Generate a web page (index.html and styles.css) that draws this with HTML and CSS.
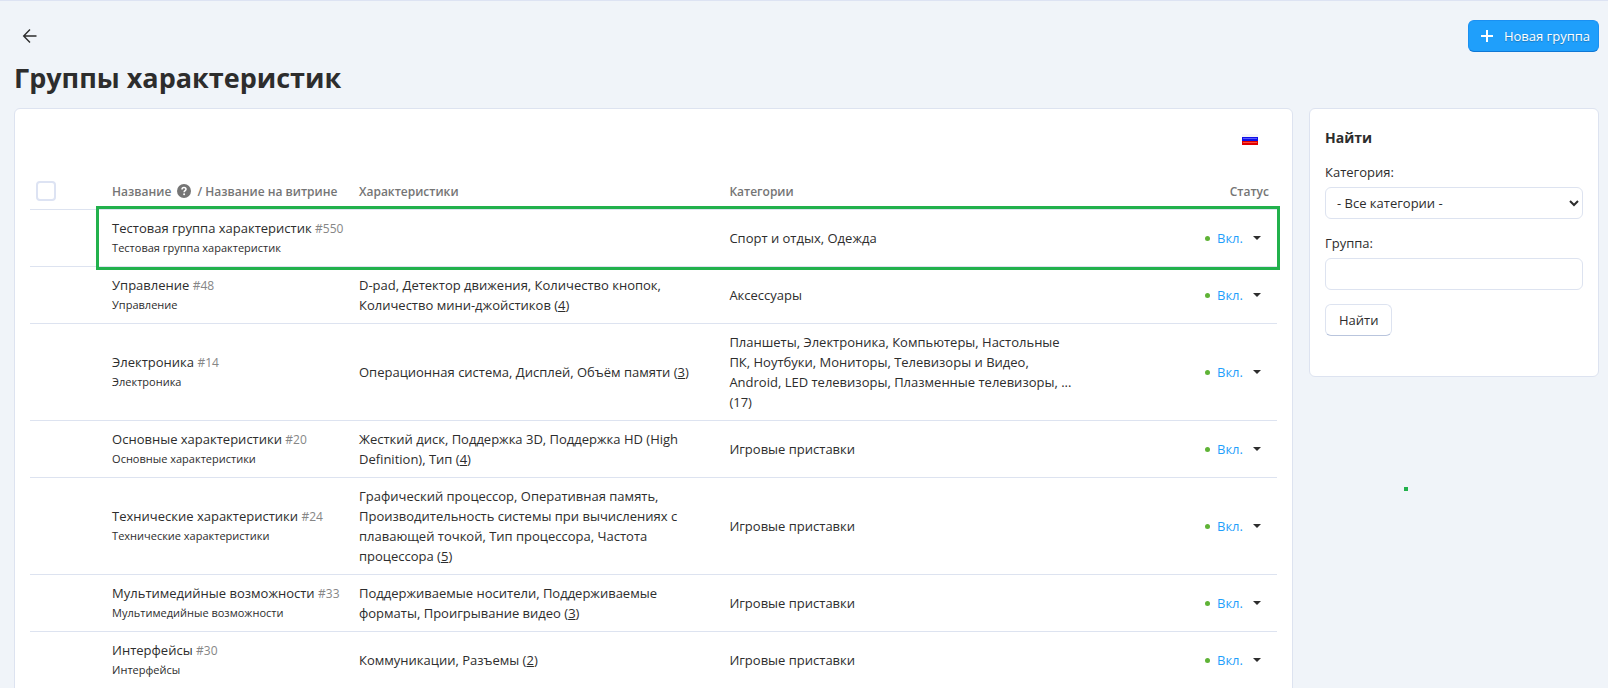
FILE: index.html
```html
<!DOCTYPE html>
<html lang="ru">
<head>
  <meta charset="UTF-8" />
  <meta name="viewport" content="width=device-width, initial-scale=1.0" />
  <title>Группы характеристик</title>
  <link rel="stylesheet" href="styles.css">
</head>
<body>
  <header class="topbar">
    <a class="back" href="#" aria-label="Назад">
      <svg width="16" height="16" viewBox="0 0 16 16" fill="none" stroke="#2d2d2d" stroke-width="1.4"><path d="M14.5 8H2M8 1.6L1.7 8L8 14.4"/></svg>
    </a>
    <button class="btn btn-primary" type="button">
      <svg width="12" height="12" viewBox="0 0 12 12" fill="#fff"><path d="M5 0h2v5h5v2H7v5H5V7H0V5h5z"/></svg>
      Новая группа
    </button>
  </header>

  <h1>Группы характеристик</h1>

  <div class="layout">
    <main class="card content">
      <!-- Language -->
      <div class="lang">
        <svg class="flag" width="16" height="11" viewBox="0 0 16 11">
          <path fill="#f4f4f8" d="M0 0h16v4H0z"/>
          <path fill="#1010e8" d="M0 3h16v5H0z"/>
          <path fill="#5a5aff" d="M1 4h14v1H1z"/>
          <path fill="#e00000" d="M0 7h16v4H0z"/>
          <path fill="#ff4a3a" d="M1 8h14v1H1z"/>
        </svg>
      </div>

      <!-- Feature groups -->
      <table class="groups">
        <colgroup>
          <col class="col-check"><col class="col-name"><col class="col-features"><col class="col-categories"><col class="col-status">
        </colgroup>
        <thead>
          <tr>
            <th class="check"><input type="checkbox" aria-label="Выбрать все"></th>
            <th>Название <svg class="help" width="14" height="14" viewBox="0 0 14 14"><circle cx="7" cy="7" r="7" fill="#757575"/><path d="M5 5.4C5 4.1 5.9 3.5 7 3.5s2 .7 2 1.8C9 6.600 7.100 6.600 7.100 8.200" fill="none" stroke="#fff" stroke-width="1.500"/><circle cx="7.100" cy="10.200" r="1" fill="#fff"/></svg> / Название на витрине</th>
            <th>Характеристики</th>
            <th>Категории</th>
            <th class="status">Статус</th>
          </tr>
        </thead>
        <tbody>
          <tr class="marked">
            <td></td>
            <td class="name">Тестовая группа характеристик <span class="id">#550</span><small>Тестовая группа характеристик</small></td>
            <td></td>
            <td>Спорт и отдых, Одежда</td>
            <td class="status"><button class="toggle" type="button">Вкл.</button></td>
          </tr>
          <tr>
            <td></td>
            <td class="name">Управление <span class="id">#48</span><small>Управление</small></td>
            <td>D-pad, Детектор движения, Количество кнопок, Количество мини-джойстиков (<a href="#">4</a>)</td>
            <td>Аксессуары</td>
            <td class="status"><button class="toggle" type="button">Вкл.</button></td>
          </tr>
          <tr>
            <td></td>
            <td class="name">Электроника <span class="id">#14</span><small>Электроника</small></td>
            <td>Операционная система, Дисплей, Объём памяти (<a href="#">3</a>)</td>
            <td class="categories">Планшеты, Электроника, Компьютеры, Настольные ПК, Ноутбуки, Мониторы, Телевизоры и Видео, Android, LED телевизоры, Плазменные телевизоры, ... (17)</td>
            <td class="status"><button class="toggle" type="button">Вкл.</button></td>
          </tr>
          <tr>
            <td></td>
            <td class="name">Основные характеристики <span class="id">#20</span><small>Основные характеристики</small></td>
            <td>Жесткий диск, Поддержка 3D, Поддержка HD (High Definition), Тип (<a href="#">4</a>)</td>
            <td>Игровые приставки</td>
            <td class="status"><button class="toggle" type="button">Вкл.</button></td>
          </tr>
          <tr>
            <td></td>
            <td class="name">Технические характеристики <span class="id">#24</span><small>Технические характеристики</small></td>
            <td>Графический процессор, Оперативная память, Производительность системы при вычислениях с плавающей точкой, Тип процессора, Частота процессора (<a href="#">5</a>)</td>
            <td>Игровые приставки</td>
            <td class="status"><button class="toggle" type="button">Вкл.</button></td>
          </tr>
          <tr>
            <td></td>
            <td class="name">Мультимедийные возможности <span class="id">#33</span><small>Мультимедийные возможности</small></td>
            <td>Поддерживаемые носители, Поддерживаемые форматы, Проигрывание видео (<a href="#">3</a>)</td>
            <td>Игровые приставки</td>
            <td class="status"><button class="toggle" type="button">Вкл.</button></td>
          </tr>
          <tr>
            <td></td>
            <td class="name">Интерфейсы <span class="id">#30</span><small>Интерфейсы</small></td>
            <td>Коммуникации, Разъемы (<a href="#">2</a>)</td>
            <td>Игровые приставки</td>
            <td class="status"><button class="toggle" type="button">Вкл.</button></td>
          </tr>
        </tbody>
      </table>
    </main>

    <!-- Search -->
    <aside class="sidebar">
      <form class="card search">
        <h2>Найти</h2>
        <label for="category">Категория:</label>
        <select id="category"><option>- Все категории -</option></select>
        <label for="group">Группа:</label>
        <input type="text" id="group">
        <button class="btn" type="button">Найти</button>
      </form>
      <span class="marker"></span>
    </aside>
  </div>
</body>
</html>
```

FILE: styles.css
```css
/* ===== Base ===== */
* { box-sizing: border-box; margin: 0; padding: 0; }
body {
  height: 100vh;
  overflow: hidden;
  padding: 19px 9px 0 14px;
  border-top: 1px solid #dde3f3;
  background: #f0f4f9;
  color: #2d2d2d;
  font: 13px/20px "Open Sans", "Noto Sans", sans-serif;
}
button, input, select { font: inherit; color: inherit; }
h1 {
  margin: 6px 0 10px;
  font-size: 27px;
  line-height: 40px;
}

/* ===== Top bar ===== */
.topbar {
  display: flex;
  justify-content: space-between;
  align-items: center;
}
.back {
  display: flex;
  margin-left: 8px;
}

/* ===== Buttons ===== */
.btn {
  display: inline-flex;
  align-items: center;
  height: 32px;
  padding: 0 13px;
  border: 1px solid #dde3f0;
  border-bottom-color: #b9c5dd;
  border-radius: 6px;
  background: #fff;
  cursor: pointer;
}
.btn-primary {
  gap: 11px;
  padding: 0 8px 0 12px;
  border-color: #1a90f2;
  border-bottom-color: #0f77d4;
  background: #1f9ffb;
  color: #fff;
  text-shadow: 0 1px 1px rgba(0, 0, 0, 0.25);
}

/* ===== Layout ===== */
.layout {
  display: flex;
  align-items: flex-start;
  gap: 16px;
}
.card {
  padding: 15px;
  border: 1px solid #dde3f0;
  border-radius: 6px;
  background: #fff;
}
.content { flex: 1; min-width: 0; }
.sidebar { position: relative; width: 290px; }

.lang {
  display: flex;
  justify-content: flex-end;
  height: 49px;
  padding: 10px 19px;
}

/* ===== Table ===== */
.groups {
  width: 100%;
  table-layout: fixed;
  border-spacing: 0;
}
.col-check { width: 6%; }
.col-name { width: 20%; }
.col-features { width: 30%; }
.col-categories { width: 30%; }
.col-status { width: 15%; }
th, td {
  padding: 8px;
  border-bottom: 1px solid #dde3f0;
  text-align: left;
  vertical-align: middle;
}
th {
  padding: 9px 8px 7px;
  color: #757575;
  font-size: 12px;
  font-weight: 600;
  white-space: nowrap;
}
.check { padding: 8px 6px; }
.check input {
  display: block;
  appearance: none;
  width: 20px;
  height: 20px;
  border: 2px solid #dde3f3;
  border-radius: 4px;
}
.help { margin: 0 3px; vertical-align: -2px; }
.name { white-space: nowrap; }
.categories { padding-right: 12px; }
.id { color: #868686; font-size: 12px; line-height: 16px; }
small { display: block; font-size: 11px; }
td a { color: inherit; }
.status { text-align: right; }

.toggle {
  display: inline-flex;
  align-items: center;
  border: 0;
  margin-right: 8px;
  background: none;
  color: #1f9ffb;
  vertical-align: top;
  cursor: pointer;
}
.toggle::before {
  content: "";
  width: 5px;
  height: 5px;
  margin-right: 7px;
  border-radius: 50%;
  background: #5fb336;
}
.toggle::after {
  content: "";
  margin-left: 10px;
  border: 4px solid transparent;
  border-top-color: #2d2d2d;
  border-bottom: 0;
}

/* ===== Highlight marks ===== */
.marked { position: relative; }
.marked::after {
  content: "";
  position: absolute;
  inset: -4px -3px -3px 66px;
  border: 3px solid #22b14c;
  pointer-events: none;
}
.marker {
  position: absolute;
  top: 379px;
  left: 95px;
  width: 4px;
  height: 4px;
  background: #22b14c;
}

/* ===== Search form ===== */
.search { padding-bottom: 40px; }
.search h2 {
  margin-bottom: 10px;
  font-size: 14px;
  line-height: 28px;
}
.search label {
  display: block;
  margin-bottom: 5px;
}
.search select,
.search input {
  display: block;
  width: 100%;
  height: 32px;
  margin-bottom: 14px;
  padding: 0 7px;
  border: 1px solid #dde3f0;
  border-radius: 6px;
  background: #fff;
}
.search select { padding-right: 0; }
```
